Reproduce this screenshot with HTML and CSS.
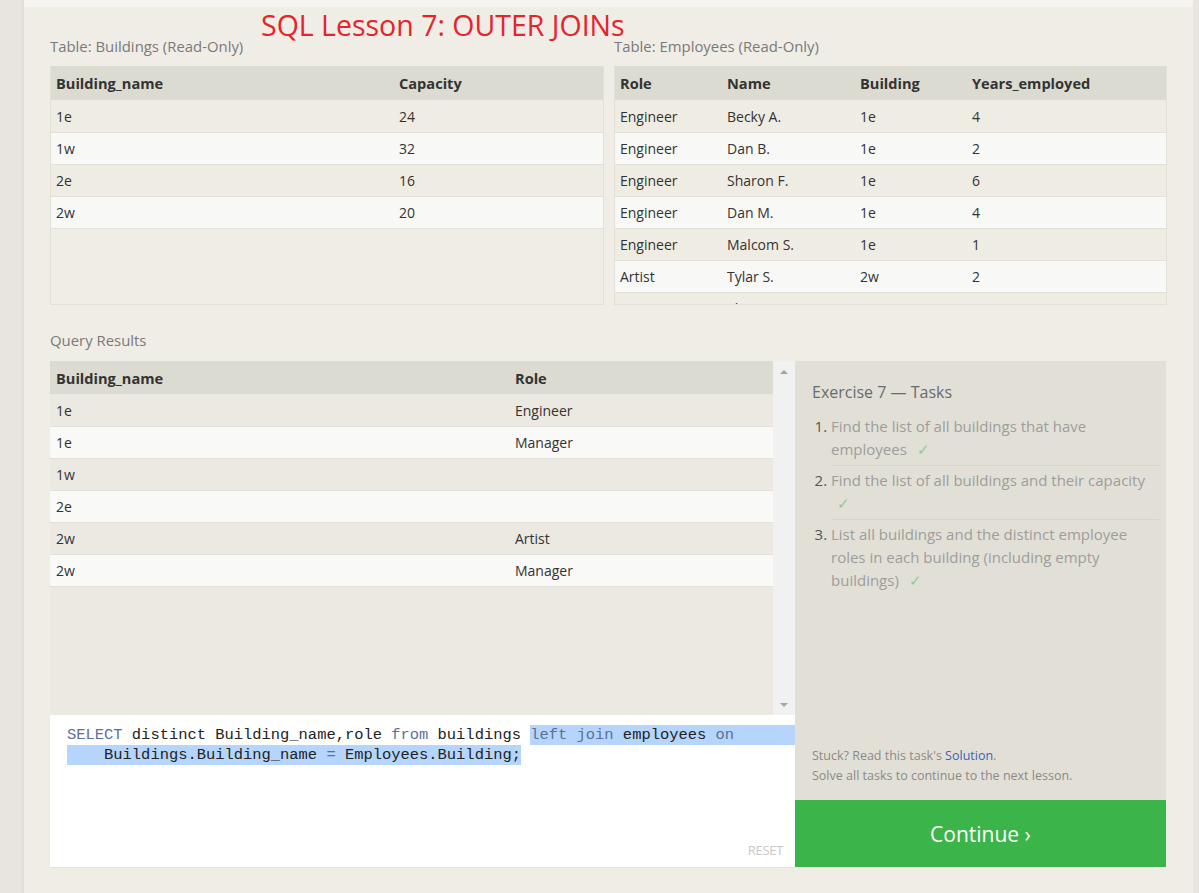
FILE: index.html
```html
<!DOCTYPE html>
<html>
<head>
<meta charset="utf-8">
<title>SQL Lesson 7: OUTER JOINs</title>
<link rel="stylesheet" href="styles.css">
</head>
<body>
<div class="page">
  <div class="topband"></div>
  <div class="content">
    <h1 class="title">SQL Lesson 7: OUTER JOINs</h1>
    <div class="tables">
      <section class="tbl-block">
        <div class="label">Table: Buildings (Read-Only)</div>
        <div class="tbl-box">
          <table class="grid cols-b">
            <thead><tr><th>Building_name</th><th>Capacity</th></tr></thead>
            <tbody>
              <tr><td>1e</td><td>24</td></tr>
              <tr><td>1w</td><td>32</td></tr>
              <tr><td>2e</td><td>16</td></tr>
              <tr><td>2w</td><td>20</td></tr>
            </tbody>
          </table>
        </div>
      </section>
      <section class="tbl-block">
        <div class="label">Table: Employees (Read-Only)</div>
        <div class="tbl-box">
          <table class="grid cols-e">
            <thead><tr><th>Role</th><th>Name</th><th>Building</th><th>Years_employed</th></tr></thead>
            <tbody>
              <tr><td>Engineer</td><td>Becky A.</td><td>1e</td><td>4</td></tr>
              <tr><td>Engineer</td><td>Dan B.</td><td>1e</td><td>2</td></tr>
              <tr><td>Engineer</td><td>Sharon F.</td><td>1e</td><td>6</td></tr>
              <tr><td>Engineer</td><td>Dan M.</td><td>1e</td><td>4</td></tr>
              <tr><td>Engineer</td><td>Malcom S.</td><td>1e</td><td>1</td></tr>
              <tr><td>Artist</td><td>Tylar S.</td><td>2w</td><td>2</td></tr>
              <tr><td>Artist</td><td>Sherman D.</td><td>2w</td><td>8</td></tr>
              <tr><td>Artist</td><td>Jakob J.</td><td>2w</td><td>6</td></tr>
            </tbody>
          </table>
        </div>
      </section>
    </div>

    <div class="label results-label">Query Results</div>
    <div class="workspace">
      <div class="left-col">
        <div class="results">
          <div class="results-table">
            <table class="grid cols-r">
              <thead><tr><th>Building_name</th><th>Role</th></tr></thead>
              <tbody>
                <tr><td>1e</td><td>Engineer</td></tr>
                <tr><td>1e</td><td>Manager</td></tr>
                <tr><td>1w</td><td></td></tr>
                <tr><td>2e</td><td></td></tr>
                <tr><td>2w</td><td>Artist</td></tr>
                <tr><td>2w</td><td>Manager</td></tr>
              </tbody>
            </table>
          </div>
          <div class="scrollbar">
            <span class="arrow up"></span>
            <span class="arrow down"></span>
          </div>
        </div>
        <div class="editor">
          <div class="code">
            <div class="line"><span class="plain"><span class="kw">SELECT</span> distinct Building_name,role <span class="kw">from</span> buildings </span><span class="sel sel-fill"><span class="kw">left join</span> employees <span class="kw">on</span></span></div>
            <div class="line"><span class="sel">    Buildings.Building_name <span class="kw">=</span> Employees.Building;</span></div>
          </div>
          <div class="reset">RESET</div>
        </div>
      </div>
      <div class="right-col">
        <div class="tasks">
          <h2 class="tasks-title">Exercise 7 — Tasks</h2>
          <ol class="task-list">
            <li>Find the list of all buildings that have employees <span class="check">✓</span></li>
            <li>Find the list of all buildings and their capacity <span class="check">✓</span></li>
            <li>List all buildings and the distinct employee roles in each building (including empty buildings) <span class="check">✓</span></li>
          </ol>
          <div class="help">
            <div>Stuck? Read this task's <a class="link">Solution</a>.</div>
            <div>Solve all tasks to continue to the next lesson.</div>
          </div>
        </div>
        <button class="continue">Continue ›</button>
      </div>
    </div>
  </div>
</div>
</body>
</html>
```
FILE: styles.css
```css
html, body {
  margin: 0;
  padding: 0;
}
body {
  background: #e8e5e1;
  font-family: "Open Sans", "Noto Sans", sans-serif;
  color: #333;
  height: 893px;
  overflow: hidden;
}
.page {
  margin-left: 24px;
  width: 1169px;
  background: #f0ede6;
  min-height: 893px;
  box-shadow: -2px 0 2px rgba(0,0,0,0.04);
  position: relative;
}
.topband {
  height: 7px;
  background: #f6f4f0;
  border-bottom-right-radius: 4px;
}
.content {
  padding: 29px 26px 0 26px;
  position: relative;
}
.title {
  position: absolute;
  left: 237px;
  top: 0;
  margin: 0;
  font-family: "Open Sans", sans-serif;
  font-weight: 400;
  font-size: 28.5px;
  line-height: 36px;
  color: #e5242b;
  white-space: nowrap;
}
.label {
  font-size: 14.9px;
  line-height: 20px;
  color: #7a7a7a;
}
.tables {
  display: grid;
  grid-template-columns: 554px 553px;
  gap: 10px;
}
.tbl-block .label {
  margin-bottom: 10px;
}
.tbl-box {
  height: 239px;
  overflow: hidden;
  border: 1px solid #e3e0d8;
  border-top: none;
  box-sizing: border-box;
  background: #f0ede6;
}
.grid {
  width: 100%;
  border-collapse: collapse;
  font-size: 14px;
}
.grid th {
  background: #dcdbd1;
  text-align: left;
  font-weight: 700;
  font-size: 14.6px;
  height: 34px;
  padding: 0 5px;
  color: #333;
}
.grid td {
  height: 32px;
  padding: 1px 5px 0 5px;
  box-sizing: border-box;
  color: #333;
  border-bottom: 1px solid #e2e0d8;
}
.grid tbody tr:nth-child(odd) td { background: #efece4; }
.grid tbody tr:nth-child(even) td { background: #f8f8f6; }

.cols-b th:first-child { width: 333px; }
.cols-e th:nth-child(1) { width: 97px; }
.cols-e th:nth-child(2) { width: 123px; }
.cols-e th:nth-child(3) { width: 102px; }
.cols-r th { padding: 0 6px; }
.cols-r td { padding: 1px 6px 0 6px; }
.cols-r th:first-child { width: 447px; }

.results-label {
  margin-top: 25px;
  margin-bottom: 11px;
}
.workspace {
  display: grid;
  grid-template-columns: 745px 371px;
}
.left-col {
  display: flex;
  flex-direction: column;
}
.results {
  display: flex;
  height: 354px;
  background: #ebe9e1;
}
.results-table {
  flex: 1;
  overflow: hidden;
}
.cols-r th { height: 33px; }
.cols-r tbody tr:nth-child(odd) td { background: #ebe9e1; }
.cols-r tbody tr:nth-child(even) td { background: #f9f9f8; }
.cols-r td { border-bottom: 1px solid #e3e1da; }
.scrollbar {
  width: 22px;
  background: #f1f1f1;
  display: flex;
  flex-direction: column;
  justify-content: space-between;
  align-items: center;
  padding: 9px 0 8px 0;
  box-sizing: border-box;
}
.arrow {
  width: 0;
  height: 0;
  border-left: 4px solid transparent;
  border-right: 4px solid transparent;
}
.arrow.up { border-bottom: 4px solid #a3a3a3; }
.arrow.down { border-top: 4px solid #a3a3a3; }

.editor {
  background: #fff;
  height: 153px;
  box-sizing: border-box;
  padding: 10px 0 8px 17px;
  display: flex;
  flex-direction: column;
  justify-content: space-between;
  border-bottom: 1px solid #e4e2dc;
}
.code {
  font-family: "Liberation Mono", "DejaVu Sans Mono", monospace;
  font-size: 15.45px;
  line-height: 20px;
  color: #222;
}
.line {
  display: flex;
  white-space: pre;
}
.sel { background: #b5d5fc; }
.sel-fill { flex: 1; }
.kw { color: #5b6f9c; }
.reset {
  align-self: flex-end;
  margin-right: 12px;
  font-size: 13px;
  line-height: 18px;
  color: #c8c8c8;
  letter-spacing: -0.3px;
}

.right-col {
  display: flex;
  flex-direction: column;
}
.tasks {
  background: #e2e0d6;
  height: 439px;
  box-sizing: border-box;
  padding: 19px 7px 14px 17px;
  display: flex;
  flex-direction: column;
}
.tasks-title {
  margin: 0 0 8px 0;
  font-size: 16px;
  font-weight: 400;
  line-height: 24px;
  color: #676c73;
}
.task-list {
  margin: 0;
  padding-left: 19px;
  flex: 1;
}
.task-list li {
  font-size: 15px;
  line-height: 23px;
  color: #9d9d9d;
  padding: 3px 0 4px 0;
  border-bottom: 1px solid #d6d4ca;
}
.task-list li:last-child { border-bottom: none; }
.task-list li::marker { color: #555; }
.check {
  color: #8fca98;
  margin-left: 6px;
}
.help {
  font-size: 12.5px;
  line-height: 20px;
  color: #8a8a8a;
}
.link { color: #3f5eb5; }
.continue {
  height: 67px;
  border: none;
  background: #3bb44a;
  color: #fff;
  font-family: "Open Sans", sans-serif;
  font-size: 21px;
  padding: 0;
  margin: 0;
  width: 371px;
}
```
